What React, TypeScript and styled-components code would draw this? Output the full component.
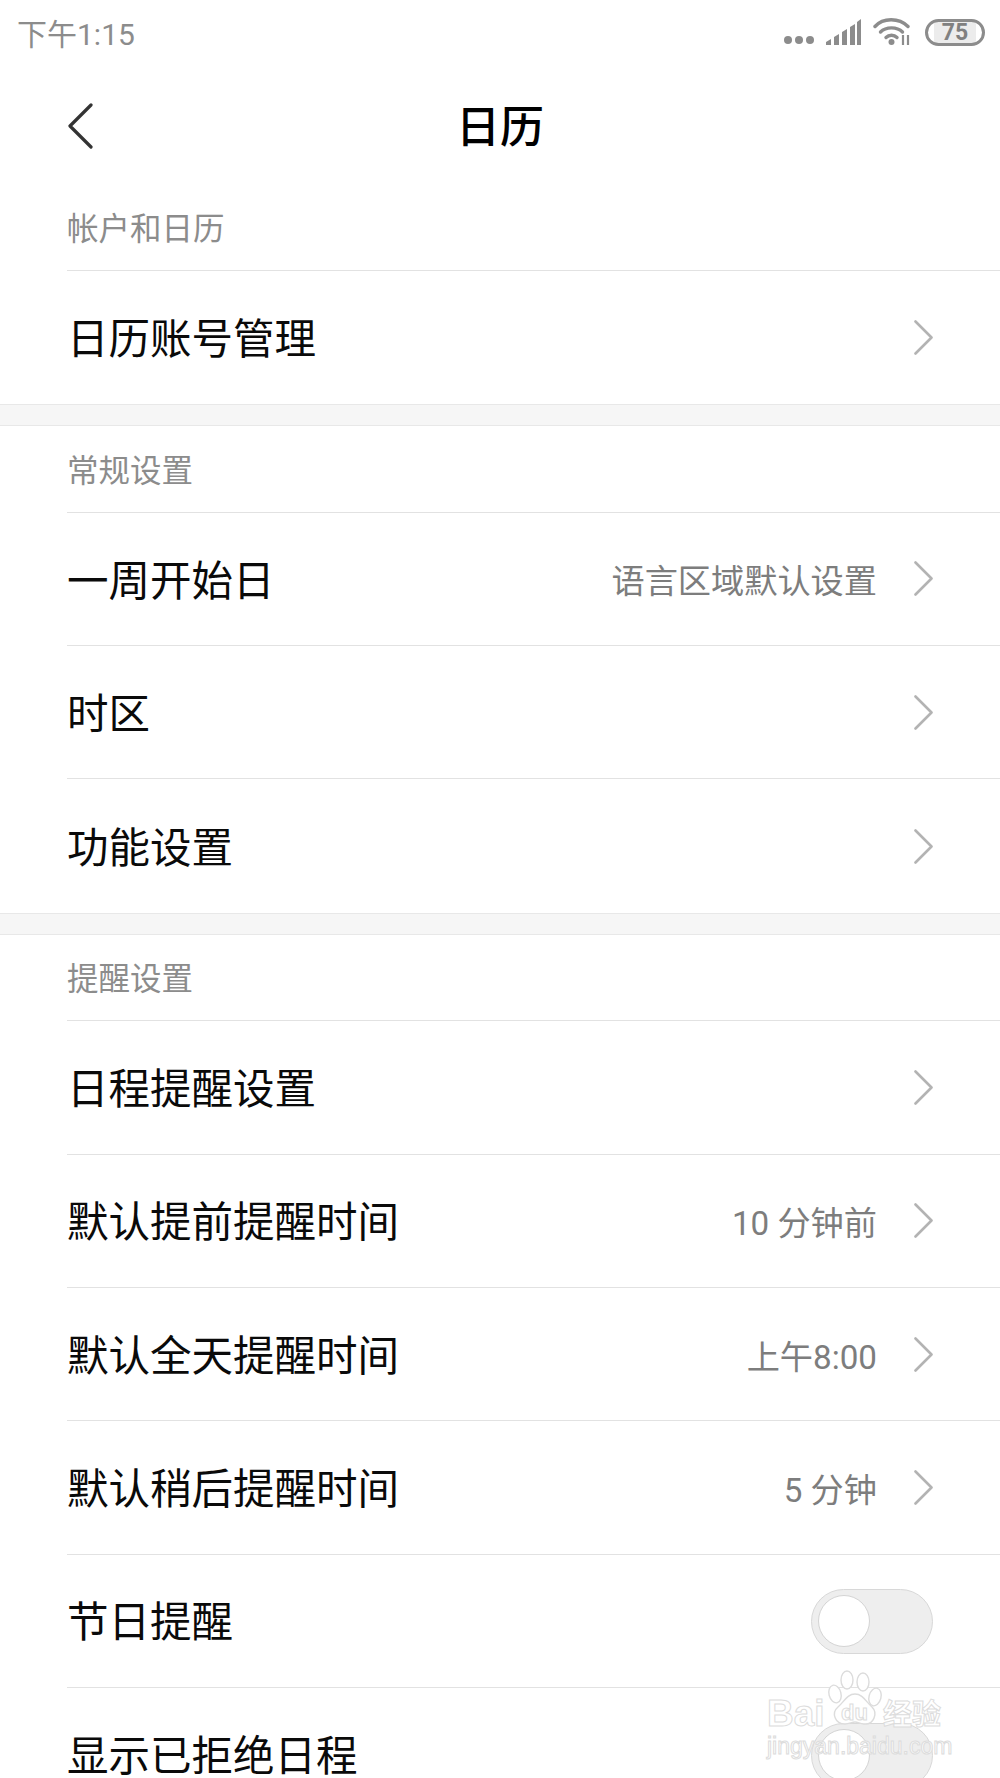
import { createGlobalStyle, styled } from "styled-components";

const GlobalStyle = createGlobalStyle`
  html, body {
    margin: 0;
    padding: 0;
    background: #fff;
  }
  body {
    font-family: "Roboto", "Noto Sans CJK SC", sans-serif;
  }
`;

type RowData = {
  label: string;
  value?: string;
  toggle?: boolean;
};

const sections: { title: string; rows: RowData[] }[] = [
  { title: "帐户和日历", rows: [{ label: "日历账号管理" }] },
  {
    title: "常规设置",
    rows: [
      { label: "一周开始日", value: "语言区域默认设置" },
      { label: "时区" },
      { label: "功能设置" },
    ],
  },
  {
    title: "提醒设置",
    rows: [
      { label: "日程提醒设置" },
      { label: "默认提前提醒时间", value: "10 分钟前" },
      { label: "默认全天提醒时间", value: "上午8:00" },
      { label: "默认稍后提醒时间", value: "5 分钟" },
      { label: "节日提醒", toggle: true },
      { label: "显示已拒绝日程", toggle: true },
    ],
  },
];

const StatusIcons = () => (
  <StatusRight>
    <svg width="32" height="12" viewBox="0 0 32 12">
      <circle cx="5" cy="6" r="4" fill="#8c8c8c" />
      <circle cx="16" cy="6" r="4" fill="#8c8c8c" />
      <circle cx="27" cy="6" r="4" fill="#8c8c8c" />
    </svg>
    <svg width="36" height="27" viewBox="0 0 36 27">
      <path
        d="M0 26v-3l5-3v6zM8 26v-8l5-3v11zM16 26V13l5-3v16zM24 26V8l5-3v21zM31 26V3l4-3v26z"
        fill="#8c8c8c"
      />
    </svg>
    <svg width="38" height="28" viewBox="0 0 38 28">
      <g fill="none" stroke="#8c8c8c" strokeWidth="3.4" strokeLinecap="round">
        <path d="M2 8.5C10-.5 26-.5 35 8.5" />
        <path d="M7.5 14C13 8.5 24 8.5 29.5 14" />
        <path d="M13 19.5c3-3 8-3 11 0" />
      </g>
      <circle cx="18.5" cy="24" r="3" fill="#8c8c8c" />
      <path d="M30 17v10M35 17v10" stroke="#8c8c8c" strokeWidth="2.2" />
    </svg>
    <Battery>75</Battery>
  </StatusRight>
);

const Chevron = () => (
  <svg width="21" height="35" viewBox="0 0 21 35">
    <path d="M3.5 1.5 19.5 17.5 3.5 33.5" fill="none" stroke="#b3b3b3" strokeWidth="2.6" strokeLinecap="round" strokeLinejoin="round" />
  </svg>
);

const Watermark = () => (
  <WatermarkBox aria-hidden="true">
    <svg width="56" height="58" viewBox="0 0 56 58">
      <g fill="#fff" stroke="#dcdcdc" strokeWidth="1.4">
        <ellipse cx="20" cy="10" rx="6" ry="9" />
        <ellipse cx="36" cy="12" rx="6" ry="9" />
        <ellipse cx="8" cy="24" rx="6" ry="9" transform="rotate(-15 8 24)" />
        <ellipse cx="48" cy="27" rx="6" ry="9" transform="rotate(15 48 27)" />
        <path d="M28 24c8 0 11 8 17 13 6 6 2 18-8 17-4 0-6-2-9-2s-6 2-10 2C8 54 4 43 11 37c6-5 9-13 17-13z" />
      </g>
    </svg>
    <WatermarkBai>Bai</WatermarkBai>
    <WatermarkDu>du</WatermarkDu>
    <WatermarkJing>经验</WatermarkJing>
    <WatermarkUrl>jingyan.baidu.com</WatermarkUrl>
  </WatermarkBox>
);

const App = () => (
  <Page>
    <GlobalStyle />
    <StatusBar>
      <StatusTime>下午1:15</StatusTime>
      <StatusIcons />
    </StatusBar>
    <NavBar>
      <BackIcon width="26" height="46" viewBox="0 0 26 46">
        <path d="M24 2 3 23l21 21" fill="none" stroke="#333" strokeWidth="3.2" strokeLinecap="round" strokeLinejoin="round" />
      </BackIcon>
      <Title>日历</Title>
    </NavBar>
    {sections.map((section, i) => (
      <section key={section.title}>
        {i > 0 && <SectionGap />}
        <SectionTitle>{section.title}</SectionTitle>
        {section.rows.map((row) => (
          <Row key={row.label}>
            <RowLabel>{row.label}</RowLabel>
            {row.value && <RowValue>{row.value}</RowValue>}
            {row.toggle ? (
              <Toggle>
                <Knob />
              </Toggle>
            ) : (
              <Chevron />
            )}
          </Row>
        ))}
      </section>
    ))}
    <Watermark />
  </Page>
);

export default App;

const Page = styled.div`
  position: relative;
  width: 1000px;
  height: 1778px;
  overflow: hidden;
  background: #fff;
`;

const StatusBar = styled.div`
  height: 70px;
  box-sizing: border-box;
  display: flex;
  align-items: center;
  justify-content: space-between;
  padding: 0 15px 6px 17px;
`;

const StatusTime = styled.span`
  font-size: 30px;
  color: #8c8c8c;
`;

const StatusRight = styled.div`
  display: flex;
  align-items: flex-end;
  gap: 11px;
`;

const Battery = styled.div`
  width: 60px;
  height: 27px;
  box-sizing: border-box;
  border: 3px solid #8c8c8c;
  border-radius: 14px;
  margin-left: 3px;
  display: flex;
  align-items: center;
  justify-content: center;
  font-size: 23px;
  font-weight: 700;
  color: #808080;
  background: linear-gradient(90deg, #fff 12%, #ececec 12%, #ececec 88%, #fff 88%);
`;

const NavBar = styled.div`
  height: 114.5px;
  box-sizing: border-box;
  display: grid;
  grid-template-columns: 1fr auto 1fr;
  align-items: center;
  padding: 0 67px 6px;
`;

const BackIcon = styled.svg`
  margin-top: 3px;
`;

const Title = styled.h1`
  margin: 0;
  font-size: 44px;
  font-weight: 500;
  color: #000;
  font-family: "Noto Sans CJK SC", sans-serif;
`;

const SectionTitle = styled.div`
  height: 86.5px;
  box-sizing: border-box;
  margin-left: 67px;
  padding-bottom: 3px;
  display: flex;
  align-items: center;
  font-size: 31.5px;
  color: #8c8c8c;
  border-bottom: 1px solid #e2e2e2;
`;

const SectionGap = styled.div`
  height: 22px;
  box-sizing: border-box;
  background: #f6f6f6;
  border-top: 1px solid #e8e8e8;
  border-bottom: 1px solid #e8e8e8;
`;

const Row = styled.div`
  height: 133.33px;
  box-sizing: border-box;
  margin-left: 67px;
  padding-right: 67px;
  display: flex;
  align-items: center;
  border-bottom: 1px solid #e2e2e2;

  section > &:last-child {
    border-bottom: none;
  }
`;

const RowLabel = styled.span`
  flex: 1;
  padding-top: 5px;
  font-size: 41.5px;
  line-height: 1.1;
  color: #0a0a0a;
`;

const RowValue = styled.span`
  margin-right: 35px;
  font-size: 33.2px;
  color: #7d7d7d;
`;

const Toggle = styled.div`
  width: 122px;
  height: 65px;
  box-sizing: border-box;
  margin-top: 1px;
  padding-left: 6px;
  display: flex;
  align-items: center;
  background: #eeeeee;
  border: 1px solid #d8d8d8;
  border-radius: 33px;
`;

const Knob = styled.div`
  width: 52px;
  height: 52px;
  box-sizing: border-box;
  background: #fff;
  border: 1px solid #d4d4d4;
  border-radius: 50%;
`;

const WatermarkBox = styled.div`
  position: absolute;
  left: 765px;
  top: 1670px;
  width: 190px;
  height: 100px;
  pointer-events: none;

  svg {
    position: absolute;
    left: 62px;
    top: 0;
  }
`;

const WatermarkText = styled.span`
  position: absolute;
  color: rgba(255, 255, 255, 0.8);
  -webkit-text-stroke: 1px #dcdcdc;
  font-family: "Liberation Sans", sans-serif;
  font-weight: 700;
  line-height: 1;
`;

const WatermarkBai = styled(WatermarkText)`
  left: 2px;
  top: 25px;
  font-size: 37px;
`;

const WatermarkDu = styled(WatermarkText)`
  left: 76px;
  top: 32px;
  font-size: 22px;
`;

const WatermarkJing = styled(WatermarkText)`
  left: 118px;
  top: 28px;
  font-size: 29px;
  font-family: "Noto Sans CJK SC", sans-serif;
`;

const WatermarkUrl = styled(WatermarkText)`
  left: 2px;
  top: 65px;
  font-size: 23px;
  font-weight: 400;
`;
